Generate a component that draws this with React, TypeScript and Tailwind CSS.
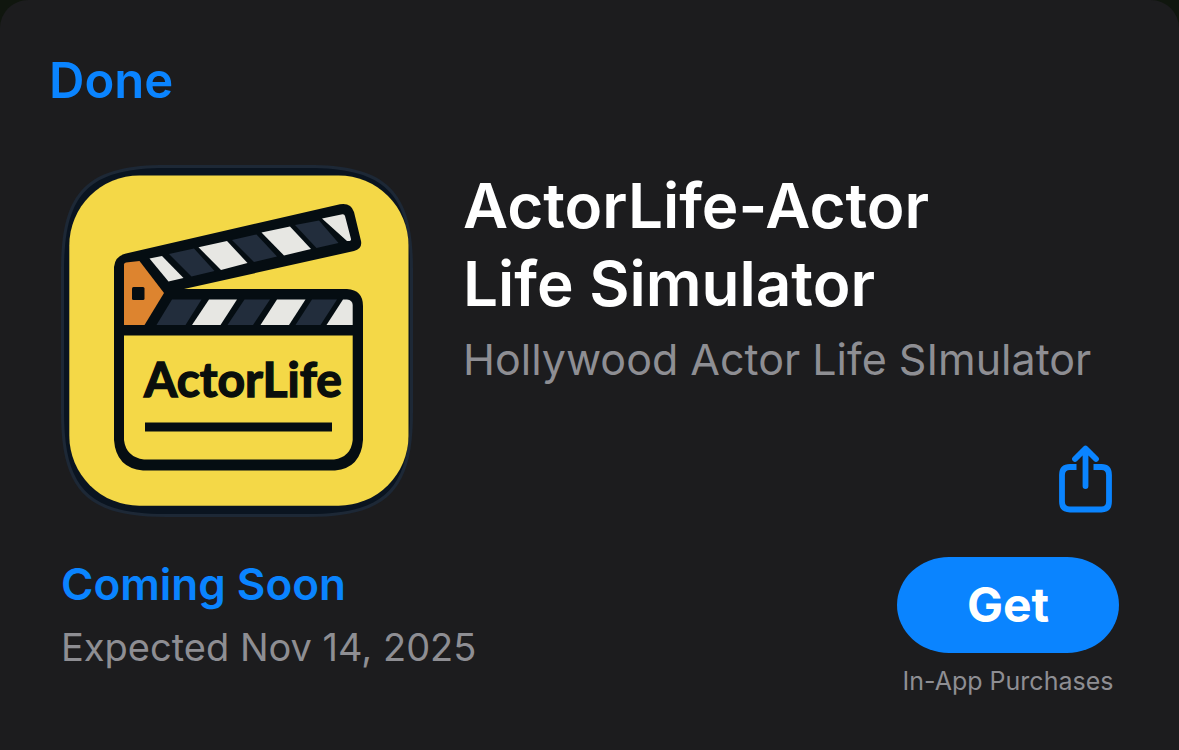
import React from 'react'

type AppInfo = {
  name: string
  subtitle: string
  status: string
  expected: string
  note: string
}

const app: AppInfo = {
  name: 'ActorLife-Actor Life Simulator',
  subtitle: 'Hollywood Actor Life SImulator',
  status: 'Coming Soon',
  expected: 'Expected Nov 14, 2025',
  note: 'In-App Purchases',
}

const AppIcon = () => (
  <svg
    viewBox="61 165 352 352"
    className="w-[352px] shrink-0"
    role="img"
    aria-label="ActorLife"
  >
    {/* tile */}
    <path
      d="M166 165H308C387 165 413 191 413 270V412C413 491 387 517 308 517H166C87 517 61 491 61 412V270C61 191 87 165 166 165Z"
      fill="#1d2836"
    />
    <path
      d="M166 168H308C385 168 410 193 410 270V412C410 489 385 514 308 514H166C89 514 64 489 64 412V270C64 193 89 168 166 168Z"
      fill="#0a1420"
    />
    <rect x="69.300" y="175.500" width="339.200" height="330.200" rx="70" fill="#f4d847" />

    {/* clapper outline */}
    <path
      d="M126 253.5L340 204.3Q351 202.500 354 212L361 241Q362.500 248.500 354 251L184 289H347Q363 290 363 306V440Q361 468 335 470.500H143Q116 468 114 440V267Q115 256 126 253.500Z"
      fill="#050d12"
    />
    <path
      d="M124 335.500H352.700V440Q351 457 334 459.500H144Q126 457 124 440Z"
      fill="#f4d847"
    />

    {/* hinge */}
    <path
      d="M124 264.500Q124 263 126 262.500L139.500 261L164 293L144.500 325H124Z"
      fill="#dd842f"
    />
    <rect x="132" y="287" width="12.500" height="13" rx="1.500" fill="#050d12" />

    {/* top arm */}
    <g fill="#e7e7e3">
      <path d="M149.500 258.500L162 256L183.500 278L168.500 281.500Z" />
      <path d="M198.500 247.300L227 241L247.500 263L221 270Z" />
      <path d="M261.500 232.500L290 226.500L311 249L284 255.500Z" />
      <path d="M322 218.500L342.500 214.200Q344.500 214 345 216L351 239Q351.500 241.500 347 241Z" />
    </g>
    <g fill="#222d3c">
      <path d="M169 254L194 248.500L214.500 271L191.500 276.500Z" />
      <path d="M232 240L256.500 234.500L277 256.500L254 262Z" />
      <path d="M295 225L319 220.500L338.500 243L316.500 248Z" />
    </g>

    {/* bottom bar */}
    <g fill="#222d3c">
      <path d="M172 299.500H201.500L185.500 325H156.500Z" />
      <path d="M244.500 299.500H270L253 325H227.500Z" />
      <path d="M312 299.500H337L320.500 325H295.500Z" />
    </g>
    <g fill="#e7e7e3">
      <path d="M209 299.500H237L220.500 325H192Z" />
      <path d="M277 299.500H305.500L289 325H260.500Z" />
      <path d="M343 299.500H347Q352.500 300 352.700 305V325H326.500Z" />
    </g>

    <text
      x="144"
      y="397"
      fill="#0a0f0c"
      stroke="#0a0f0c"
      strokeWidth="1.400"
      fontSize="48"
      fontWeight="700"
      fontFamily="Lato, sans-serif"
    >
      ActorLife
    </text>
    <rect x="145" y="422.500" width="187" height="9" fill="#050d12" />
  </svg>
)

const ShareIcon = () => (
  <svg
    viewBox="0 0 54 68"
    className="w-[54px]"
    fill="none"
    stroke="currentColor"
    strokeWidth="5.800"
    aria-hidden="true"
  >
    <path d="M17.500 22H11Q3 22 3 30V56.500Q3 64.500 11 64.500H42.500Q50 64.500 50 56.500V30Q50 22 42.500 22H34.500" />
    <path d="M26.500 41V4M16 14L26.500 3.500L37 14" strokeLinecap="round" strokeLinejoin="round" />
  </svg>
)

const App = () => {
  return (
    <div className="min-h-screen bg-[#10160e] font-[Inter,sans-serif]">
      <div className="min-h-screen rounded-t-[28px] bg-[#1c1c1e]">
        <header className="px-[49px] pt-[49px]">
          <button type="button" className="text-[49px] leading-[64px] font-semibold text-[#0a84ff]">
            Done
          </button>
        </header>

        <main className="pt-[52px] pr-[60px] pl-[61px]">
          <section className="flex gap-[50px]">
            <AppIcon />
            <div className="flex min-w-0 flex-1 flex-col">
              <h1 className="max-w-[560px] pt-0.5 text-[62px] leading-[78px] font-semibold text-white">
                {app.name}
              </h1>
              <p className="mt-1.5 text-[43px] leading-[60px] whitespace-nowrap text-[#8e8e93]">
                {app.subtitle}
              </p>
              <button
                type="button"
                aria-label="Share"
                className="mt-auto mr-1.5 self-end pb-1 text-[#0a84ff]"
              >
                <ShareIcon />
              </button>
            </div>
          </section>

          <section className="flex items-start justify-between pt-10">
            <div>
              <p className="text-[44px] leading-[54px] font-semibold text-[#0a84ff]">
                {app.status}
              </p>
              <p className="mt-1.5 text-[38px] leading-[60px] text-[#8e8e93]">
                {app.expected}
              </p>
            </div>
            <div className="flex flex-col items-center">
              <button
                type="button"
                className="h-24 w-[222px] rounded-[52px/48px] bg-[#0a84ff] text-[48px] font-bold text-white"
              >
                Get
              </button>
              <p className="mt-3 text-[25px] leading-8 text-[#8e8e93]">{app.note}</p>
            </div>
          </section>
        </main>
      </div>
    </div>
  )
}

export default App
